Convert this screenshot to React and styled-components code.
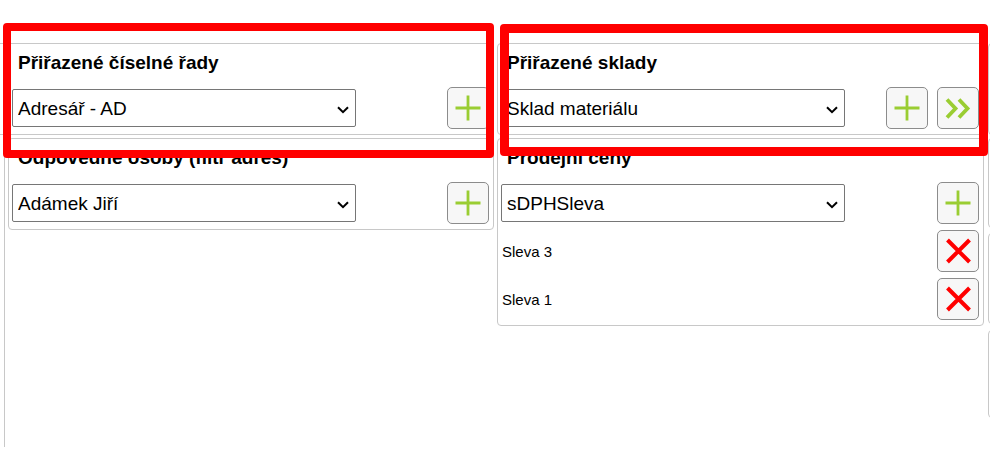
import React from "react";
import styled, { createGlobalStyle } from "styled-components";

const Global = createGlobalStyle`
  html, body { margin: 0; padding: 0; background: #fff; overflow: hidden; }
  body { font-family: "Liberation Sans", Arial, sans-serif; color: #000; }
  #root { width: 990px; height: 449px; }
`;

const Page = styled.div`
  position: relative;
  width: 990px;
  height: 449px;
  overflow: hidden;
  display: flex;
  align-items: flex-start;
  padding-top: 43px;
  box-sizing: border-box;
`;

const LeftColumn = styled.div`
  margin-left: 4px;
  width: 490px;
  height: 404px;
  flex: none;
  box-sizing: border-box;
  border-left: 1px solid #c8c8c8;
  padding-left: 3px;
  display: flex;
  flex-direction: column;
  gap: 3px;
`;

const RightColumn = styled.div`
  margin-left: 3px;
  width: 487px;
  flex: none;
  display: flex;
  flex-direction: column;
  gap: 3px;
`;

const SideColumn = styled.div`
  margin-left: 4px;
  width: 300px;
  flex: none;
  display: flex;
  flex-direction: column;
`;

const Card = styled.section`
  box-sizing: border-box;
  border: 1px solid #c8c8c8;
  border-radius: 4px;
  padding: 8px 4px 5px ${(p) => (p.$bleed ? 15 : 3)}px;
  margin-left: ${(p) => (p.$bleed ? -12 : 0)}px;
  display: flex;
  flex-direction: column;
  gap: 6px;
  background: #fff;
`;

const StubCard = styled.div`
  box-sizing: border-box;
  border: 1px solid #c8c8c8;
  border-radius: 4px;
  height: ${(p) => p.$h}px;
  margin-top: ${(p) => p.$gap}px;
`;

const Heading = styled.h4`
  margin: 0 0 7px 6px;
  font-size: 19px;
  line-height: 22px;
  font-weight: bold;
  white-space: nowrap;
`;

const Row = styled.div`
  display: flex;
  align-items: center;
  justify-content: space-between;
  height: 42px;
`;

const SelectWrap = styled.div`
  display: grid;
  width: 344px;
  height: 38px;
  align-items: center;
  & > * { grid-area: 1 / 1; }
`;

const NativeSelect = styled.select`
  appearance: none;
  -webkit-appearance: none;
  width: 100%;
  height: 38px;
  box-sizing: border-box;
  border: 1px solid #767676;
  border-radius: 2px;
  background: #fff;
  padding: 0 28px 0 5px;
  font-family: "Liberation Sans", Arial, sans-serif;
  font-size: 19px;
  color: #000;
  outline: none;
`;

const Chevron = styled.svg`
  justify-self: end;
  margin-right: 7px;
  margin-top: 3px;
  pointer-events: none;
`;

const ButtonGroup = styled.div`
  display: flex;
  gap: 9px;
`;

const IconButton = styled.button`
  width: 42px;
  height: 42px;
  box-sizing: border-box;
  border: 1px solid #8c8c8c;
  border-radius: 5px;
  background: #f7f7f7;
  padding: 0;
  display: flex;
  align-items: center;
  justify-content: center;
  cursor: pointer;
`;

const ItemLabel = styled.span`
  font-size: 15px;
  padding-left: 1px;
  white-space: nowrap;
`;

const Annotation = styled.div`
  position: absolute;
  left: ${(p) => p.$x}px;
  top: ${(p) => p.$y}px;
  width: ${(p) => p.$w}px;
  height: ${(p) => p.$h}px;
  box-sizing: border-box;
  border: ${(p) => p.$t}px solid #ff0000;
  border-radius: 4px;
  pointer-events: none;
`;

const GREEN = "#9acd32";

const ChevronIcon = () => (
  <Chevron width="12" height="8" viewBox="0 0 12 8">
    <path d="M1 1.2 L6 6.2 L11 1.2" fill="none" stroke="#000" strokeWidth="2" />
  </Chevron>
);

const PlusIcon = () => (
  <svg width="26" height="26" viewBox="0 0 26 26">
    <path d="M13 0.5 V25.5 M0.5 13 H25.5" stroke={GREEN} strokeWidth="2.8" fill="none" />
  </svg>
);

const CrossIcon = () => (
  <svg width="27" height="26" viewBox="0 0 27 26">
    <path d="M2.5 2 L24.5 24 M24.5 2 L2.5 24" stroke="#ff0000" strokeWidth="4" fill="none" />
  </svg>
);

const DoubleChevronIcon = () => (
  <svg width="26" height="21" viewBox="0 0 26 21">
    <path
      d="M2 1.5 L10.5 10.5 L2 19.5 M14 1.5 L22.5 10.5 L14 19.5"
      stroke={GREEN}
      strokeWidth="3.8"
      fill="none"
    />
  </svg>
);

const Select = ({ value }) => (
  <SelectWrap>
    <NativeSelect defaultValue={value}>
      <option value={value}>{value}</option>
    </NativeSelect>
    <ChevronIcon />
  </SelectWrap>
);

const AddRow = ({ value }) => (
  <Row>
    <Select value={value} />
    <IconButton aria-label="Přidat">
      <PlusIcon />
    </IconButton>
  </Row>
);

const priceItems = ["Sleva 3", "Sleva 1"];

export default function App() {
  return (
    <>
      <Global />
      <Page>
        <LeftColumn>
          <Card $bleed>
            <Heading>Přiřazené číselné řady</Heading>
            <AddRow value="Adresář - AD" />
          </Card>
          <Card>
            <Heading>Odpovědné osoby (filtr adres)</Heading>
            <AddRow value="Adámek Jiří" />
          </Card>
        </LeftColumn>

        <RightColumn>
          <Card>
            <Heading>Přiřazené sklady</Heading>
            <Row>
              <Select value="Sklad materiálu" />
              <ButtonGroup>
                <IconButton aria-label="Přidat">
                  <PlusIcon />
                </IconButton>
                <IconButton aria-label="Přidat vše">
                  <DoubleChevronIcon />
                </IconButton>
              </ButtonGroup>
            </Row>
          </Card>
          <Card>
            <Heading>Prodejní ceny</Heading>
            <AddRow value="sDPHSleva" />
            {priceItems.map((item) => (
              <Row key={item}>
                <ItemLabel>{item}</ItemLabel>
                <IconButton aria-label="Odebrat">
                  <CrossIcon />
                </IconButton>
              </Row>
            ))}
          </Card>
        </RightColumn>

        <SideColumn>
          <StubCard $h={92} $gap={0} />
          <StubCard $h={90} $gap={3} />
          <StubCard $h={91} $gap={5} />
          <StubCard $h={88} $gap={6} />
        </SideColumn>

        <Annotation $x={3} $y={23} $w={491} $h={135} $t={8} />
        <Annotation $x={500} $y={24} $w={488} $h={132} $t={9} />
      </Page>
    </>
  );
}
